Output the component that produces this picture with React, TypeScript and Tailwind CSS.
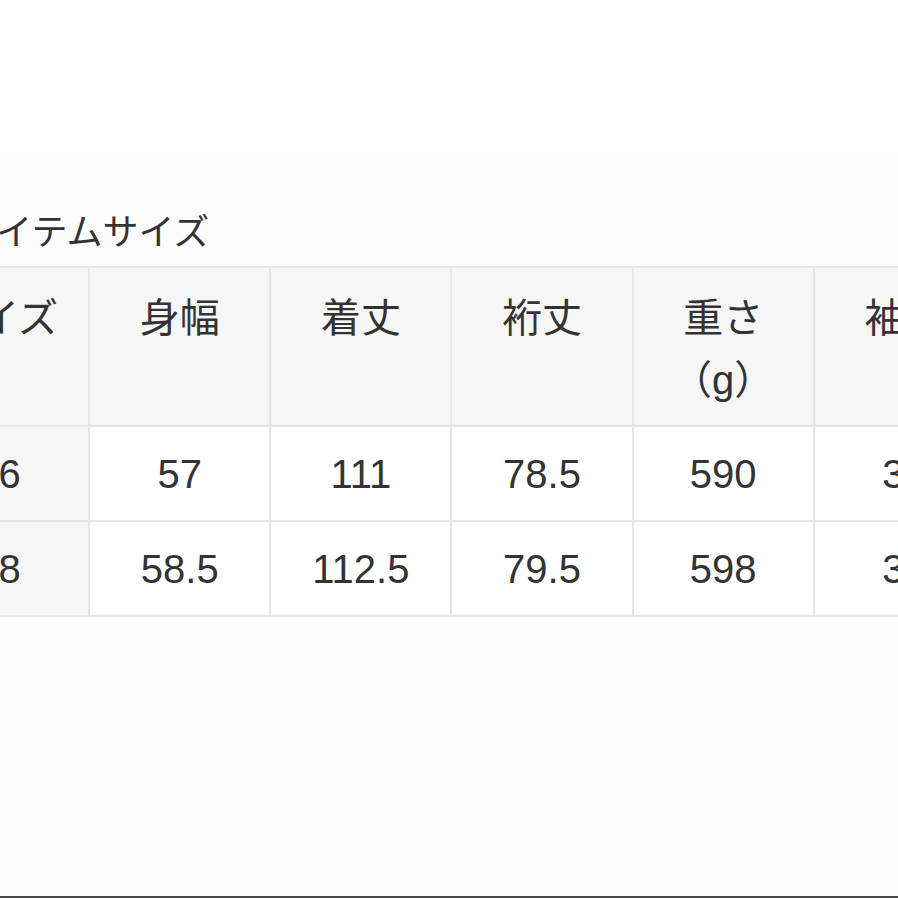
import React from "react";

const headers = ["サイズ", "身幅", "着丈", "裄丈", "重さ\n（g）", "袖丈"];
const rows = [
  ["46", "57", "111", "78.5", "590", "35"],
  ["48", "58.5", "112.5", "79.5", "598", "36"],
];

export default function App() {
  return (
    <div
      className="w-[898px] h-[898px] overflow-hidden bg-white flex flex-col text-[#333333]"
      style={{ fontFamily: '"Liberation Sans", "Noto Sans CJK JP", sans-serif' }}
    >
      {/* 上の余白 */}
      <div className="h-[152px] shrink-0 bg-white" />

      <section className="flex-1 bg-[#fcfcfc] pt-[54px] flex flex-col">
        <h2 className="ml-[-38px] text-[36px] leading-[54px] font-normal whitespace-nowrap">
          アイテムサイズ
        </h2>

        <table className="mt-[6px] ml-[-93px] w-[1089px] table-fixed border-collapse border-2 border-[#e6e6e6] text-[40px]">
          <thead>
            <tr className="h-[159px]">
              {headers.map((h) => (
                <th
                  key={h}
                  className="align-top pt-[19px] font-normal bg-[#f6f6f6] border-2 border-[#e6e6e6] leading-[62px] whitespace-pre-line"
                >
                  {h}
                </th>
              ))}
            </tr>
          </thead>
          <tbody>
            {rows.map((r) => (
              <tr key={r[0]} className="h-[95px]">
                {r.map((v, i) =>
                  i === 0 ? (
                    <th
                      key={i}
                      className="font-normal bg-[#f6f6f6] border-2 border-[#e6e6e6] leading-[62px] text-center"
                    >
                      {v}
                    </th>
                  ) : (
                    <td
                      key={i}
                      className="bg-white border-2 border-[#e6e6e6] leading-[62px] text-center"
                    >
                      {v}
                    </td>
                  )
                )}
              </tr>
            ))}
          </tbody>
        </table>

        <div className="flex-1" />
        <div className="h-[2px] bg-[#4a4a4a]" />
      </section>
    </div>
  );
}
